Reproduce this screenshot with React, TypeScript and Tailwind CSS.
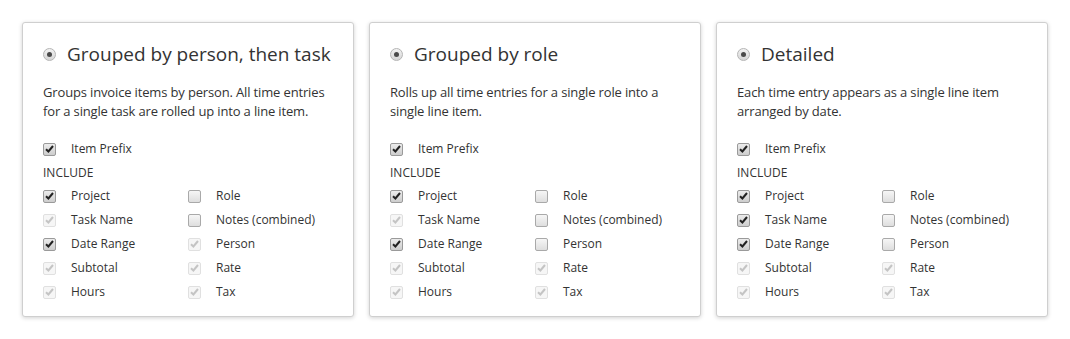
import React from "react";

type Box = "on" | "off" | "locked";

type Option = {
  title: string;
  description: string;
  left: [string, Box][];
  right: [string, Box][];
};

const options: Option[] = [
  {
    title: "Grouped by person, then task",
    description:
      "Groups invoice items by person. All time entries for a single task are rolled up into a line item.",
    left: [
      ["Project", "on"],
      ["Task Name", "locked"],
      ["Date Range", "on"],
      ["Subtotal", "locked"],
      ["Hours", "locked"],
    ],
    right: [
      ["Role", "off"],
      ["Notes (combined)", "off"],
      ["Person", "locked"],
      ["Rate", "locked"],
      ["Tax", "locked"],
    ],
  },
  {
    title: "Grouped by role",
    description:
      "Rolls up all time entries for a single role into a single line item.",
    left: [
      ["Project", "on"],
      ["Task Name", "locked"],
      ["Date Range", "on"],
      ["Subtotal", "locked"],
      ["Hours", "locked"],
    ],
    right: [
      ["Role", "off"],
      ["Notes (combined)", "off"],
      ["Person", "off"],
      ["Rate", "locked"],
      ["Tax", "locked"],
    ],
  },
  {
    title: "Detailed",
    description:
      "Each time entry appears as a single line item arranged by date.",
    left: [
      ["Project", "on"],
      ["Task Name", "on"],
      ["Date Range", "on"],
      ["Subtotal", "locked"],
      ["Hours", "locked"],
    ],
    right: [
      ["Role", "off"],
      ["Notes (combined)", "off"],
      ["Person", "off"],
      ["Rate", "locked"],
      ["Tax", "locked"],
    ],
  },
];

function Checkbox({ state }: { state: Box }) {
  const locked = state === "locked";
  let cls =
    "flex h-[13px] w-[13px] shrink-0 items-center justify-center rounded-[2px] border ";
  if (locked) cls += "border-[#e0e0e0] bg-[#f6f6f6]";
  else if (state === "on")
    cls += "border-[#9a9a9a] bg-gradient-to-b from-[#ececec] to-[#cdcdcd]";
  else cls += "border-[#a9a9a9] bg-gradient-to-b from-[#f6f6f6] to-[#dedede]";
  return (
    <span className={cls}>
      {state !== "off" && (
        <svg width="9" height="8" viewBox="0 0 9 8">
          <path
            d="M1 4.2 L3.4 6.5 L8 1"
            fill="none"
            stroke={locked ? "#c4c4c4" : "#222"}
            strokeWidth="2"
          />
        </svg>
      )}
    </span>
  );
}

function Row({ label, state }: { label: string; state: Box }) {
  return (
    <div className="flex h-6 items-center">
      <Checkbox state={state} />
      <span className="ml-[15px] text-[12px] text-[#333]">{label}</span>
    </div>
  );
}

function Card({ option }: { option: Option }) {
  return (
    <div className="h-[295px] rounded-[3px] border border-[#cfcfcf] bg-white pl-5 pr-3 pt-[17px] shadow-[0_1px_4px_rgba(0,0,0,0.18)]">
      <div className="flex h-7 items-center">
        <span className="flex h-[13px] w-[13px] shrink-0 items-center justify-center rounded-full border border-[#b5b5b5] bg-gradient-to-b from-[#f2f2f2] to-[#d6d6d6]">
          <span className="h-[5px] w-[5px] rounded-full bg-[#4a4a4a]" />
        </span>
        <h2 className="ml-[11px] whitespace-nowrap text-[19px] text-[#333]">
          {option.title}
        </h2>
      </div>
      <p className="mt-[15px] text-[13px] leading-[19px] tracking-[-0.15px] text-[#333]">
        {option.description}
      </p>
      <div className="mt-4">
        <Row label="Item Prefix" state="on" />
      </div>
      <div className="flex h-[23px] items-center text-[12px] text-[#333]">
        INCLUDE
      </div>
      <div className="grid grid-cols-[145px_1fr]">
        <div>
          {option.left.map(([label, state]) => (
            <Row key={label} label={label} state={state} />
          ))}
        </div>
        <div>
          {option.right.map(([label, state]) => (
            <Row key={label} label={label} state={state} />
          ))}
        </div>
      </div>
    </div>
  );
}

export default function App() {
  return (
    <div
      className="h-[339px] w-[1070px] bg-white pt-[22px] pl-[22px]"
      style={{ fontFamily: '"Open Sans", sans-serif' }}
    >
      <div className="grid w-[1026px] grid-cols-3 gap-[15px]">
        {options.map((o) => (
          <Card key={o.title} option={o} />
        ))}
      </div>
    </div>
  );
}
